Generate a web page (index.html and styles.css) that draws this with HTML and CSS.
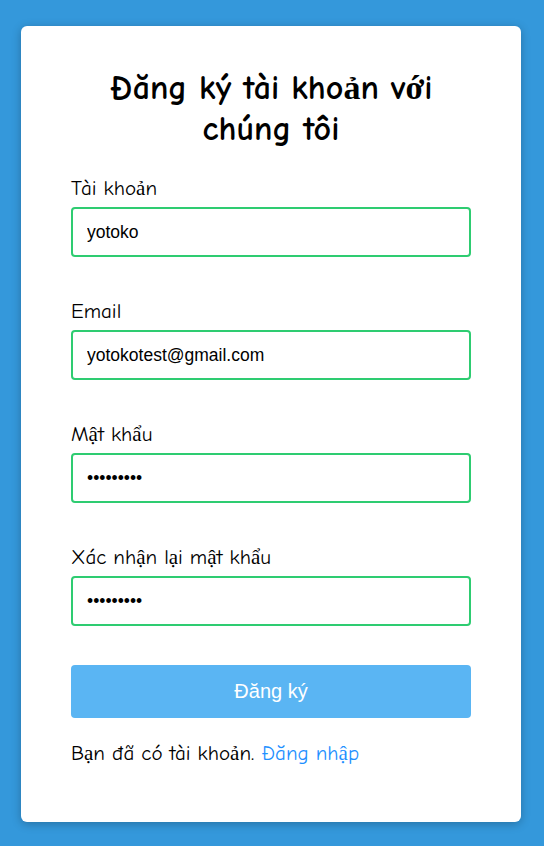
FILE: index.html
```html
<!DOCTYPE html>
<html lang="vi">
<head>
<meta charset="utf-8">
<title>Đăng ký</title>
<link rel="stylesheet" href="styles.css">
</head>
<body>
<div class="card">
  <h1 class="title">Đăng ký tài khoản với chúng tôi</h1>
  <form class="form">
    <div class="field">
      <label class="label">Tài khoản</label>
      <input class="input" type="text" value="yotoko">
    </div>
    <div class="field">
      <label class="label">Email</label>
      <input class="input" type="text" value="yotokotest@gmail.com">
    </div>
    <div class="field">
      <label class="label">Mật khẩu</label>
      <input class="input" type="password" value="123456789">
    </div>
    <div class="field">
      <label class="label">Xác nhận lại mật khẩu</label>
      <input class="input" type="password" value="123456789">
    </div>
    <button class="btn" type="button">Đăng ký</button>
  </form>
  <p class="footer">Bạn đã có tài khoản. <a class="link" href="#">Đăng nhập</a></p>
</div>
</body>
</html>
```
FILE: styles.css
```css
html, body {
  margin: 0;
  padding: 0;
}
body {
  background: #3498db;
  font-family: "Comic Sans MS", "Comic Neue", "Chalkboard SE", cursive;
  color: #000;
  min-height: 846px;
  padding-top: 26px;
  box-sizing: border-box;
}
.card {
  width: 500px;
  margin-left: 21px;
  background: #fff;
  border-radius: 6px;
  box-shadow: 0 2px 10px rgba(0, 0, 0, 0.25);
  padding: 42px 50px 0;
  box-sizing: border-box;
  height: 796px;
}
.title {
  margin: 0 auto;
  width: 380px;
  text-align: center;
  font-size: 34px;
  line-height: 41px;
  font-weight: bold;
}
.form {
  margin-top: 26px;
  display: flex;
  flex-direction: column;
  gap: 42px;
}
.field {
  display: flex;
  flex-direction: column;
  gap: 7px;
}
.label {
  font-size: 21px;
  line-height: 24px;
  height: 24px;
}
.input {
  height: 50px;
  box-sizing: border-box;
  border: 2px solid #2ecc71;
  border-radius: 4px;
  padding: 0 14px;
  font-family: "Liberation Sans", Arial, sans-serif;
  font-size: 17.5px;
  color: #000;
  outline: none;
}
.btn {
  margin-top: -3px;
  height: 53px;
  border: none;
  border-radius: 4px;
  background: #5ab5f3;
  color: #fff;
  font-family: "Liberation Sans", Arial, sans-serif;
  font-size: 20px;
}
.footer {
  margin: 23px 0 0;
  font-size: 21px;
  line-height: 24px;
}
.link {
  color: #1e90ff;
  text-decoration: none;
}
```
